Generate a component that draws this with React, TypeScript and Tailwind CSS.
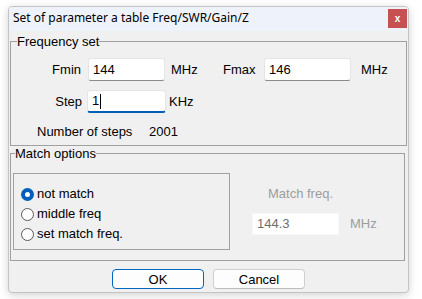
import React from "react";

const ui = { fontFamily: '"Liberation Sans", Arial, sans-serif' };

function Radio({ checked, label }: { checked?: boolean; label: string }) {
  return (
    <div className="flex items-center h-[20px]">
      {checked ? (
        <span className="w-[13px] h-[13px] rounded-full bg-[#005fb8] flex items-center justify-center">
          <span className="w-[5px] h-[5px] rounded-full bg-white" />
        </span>
      ) : (
        <span className="w-[13px] h-[13px] rounded-full bg-white border border-[#5a5a5a]" />
      )}
      <span className="ml-[3px] text-[13px] text-black">{label}</span>
    </div>
  );
}

function Field({ value, w, focused }: { value: string; w: string; focused?: boolean }) {
  return (
    <div
      className={
        "h-[23px] bg-white border border-[#e5e5e5] rounded-[3px] flex items-center pl-[4px] text-[13px] text-black " +
        w +
        (focused ? " border-b-2 border-b-[#005fb8]" : " border-b-[#8a8a8a]")
      }
    >
      {value}
      {focused && <span className="ml-[1px] w-px h-[15px] bg-black" />}
    </div>
  );
}

export default function App() {
  return (
    <div className="w-[422px] h-[299px] bg-white pt-[6px] pl-[8px]" style={ui}>
      <div className="w-[401px] h-[287px] bg-[#f0f0f0] border border-[#c4c4c4] rounded-[4px] shadow-[0_2px_8px_rgba(0,0,0,0.18)] overflow-hidden flex flex-col">
        {/* Title bar */}
        <div className="h-[24px] bg-[#eef2fa] flex items-start justify-between">
          <span
            className="pl-[4px] pt-[4px] text-[12px] leading-[14px] text-black"
            style={{ fontFamily: '"Noto Sans", "Open Sans", sans-serif' }}
          >
            Set of parameter a table Freq/SWR/Gain/Z
          </span>
          <div className="mt-[2px] mr-[1px] w-[19px] h-[19px] bg-[#c75050] flex items-center justify-center text-white text-[10px] font-bold leading-none">
            x
          </div>
        </div>

        {/* Frequency set */}
        <fieldset className="mt-[3px] mx-[1px] border border-[#a0a0a0] px-0 pb-[6px]">
          <legend className="ml-[6px] text-[13px] leading-[15px] text-black">Frequency set</legend>
          <div className="flex items-center pt-[9px]">
            <span className="w-[70px] text-right text-[13px]">Fmin</span>
            <div className="ml-[7px]">
              <Field value="144" w="w-[77px]" />
            </div>
            <span className="ml-[6px] w-[52px] text-[13px]">MHz</span>
            <span className="text-[13px] w-[33px]">Fmax</span>
            <div className="ml-[8px]">
              <Field value="146" w="w-[87px]" />
            </div>
            <span className="ml-[10px] text-[13px]">MHz</span>
          </div>
          <div className="flex items-center mt-[9px]">
            <span className="w-[71px] text-right text-[13px]">Step</span>
            <div className="ml-[5px]">
              <Field value="1" w="w-[79px]" focused />
            </div>
            <span className="ml-[3px] text-[13px]">KHz</span>
          </div>
          <div className="flex items-center mt-[11px] h-[15px] pl-[26px] text-[13px]">
            <span className="w-[112px]">Number of steps</span>
            <span>2001</span>
          </div>
        </fieldset>

        {/* Match options */}
        <fieldset className="ml-[1px] mr-[3px] border border-[#a0a0a0] px-0 pb-[10px]">
          <legend className="ml-[4px] text-[13px] leading-[15px] text-black">Match options</legend>
          <div className="flex pt-[12px]">
            <div className="ml-[2px] w-[217px] h-[77px] border border-[#a0a0a0] pt-[10px] pl-[7px]">
              <Radio checked label="not match" />
              <Radio label="middle freq" />
              <Radio label="set match freq." />
            </div>
            <div className="ml-[22px] flex flex-col pt-[13px]">
              <span className="pl-[16px] text-[13px] leading-[15px] text-[#9d9d9d]">Match freq.</span>
              <div className="flex items-start mt-[12px]">
                <div className="w-[87px] h-[22px] bg-white border border-[#f7f7f7] flex items-center pl-[4px] text-[13px] text-[#6e6e6e]">
                  144.3
                </div>
                <span className="ml-[11px] mt-[1px] text-[13px] text-[#9d9d9d]">MHz</span>
              </div>
            </div>
          </div>
        </fieldset>

        {/* Buttons */}
        <div className="flex justify-center gap-[9px] mt-[8px]">
          <button className="w-[92px] h-[20px] bg-[#fdfdfd] border border-[#0067c0] rounded-[4px] text-[13px] text-black leading-none">
            OK
          </button>
          <button className="w-[92px] h-[20px] bg-[#fdfdfd] border border-[#d0d0d0] border-b-[#bdbdbd] rounded-[4px] text-[13px] text-black leading-none">
            Cancel
          </button>
        </div>
      </div>
    </div>
  );
}
